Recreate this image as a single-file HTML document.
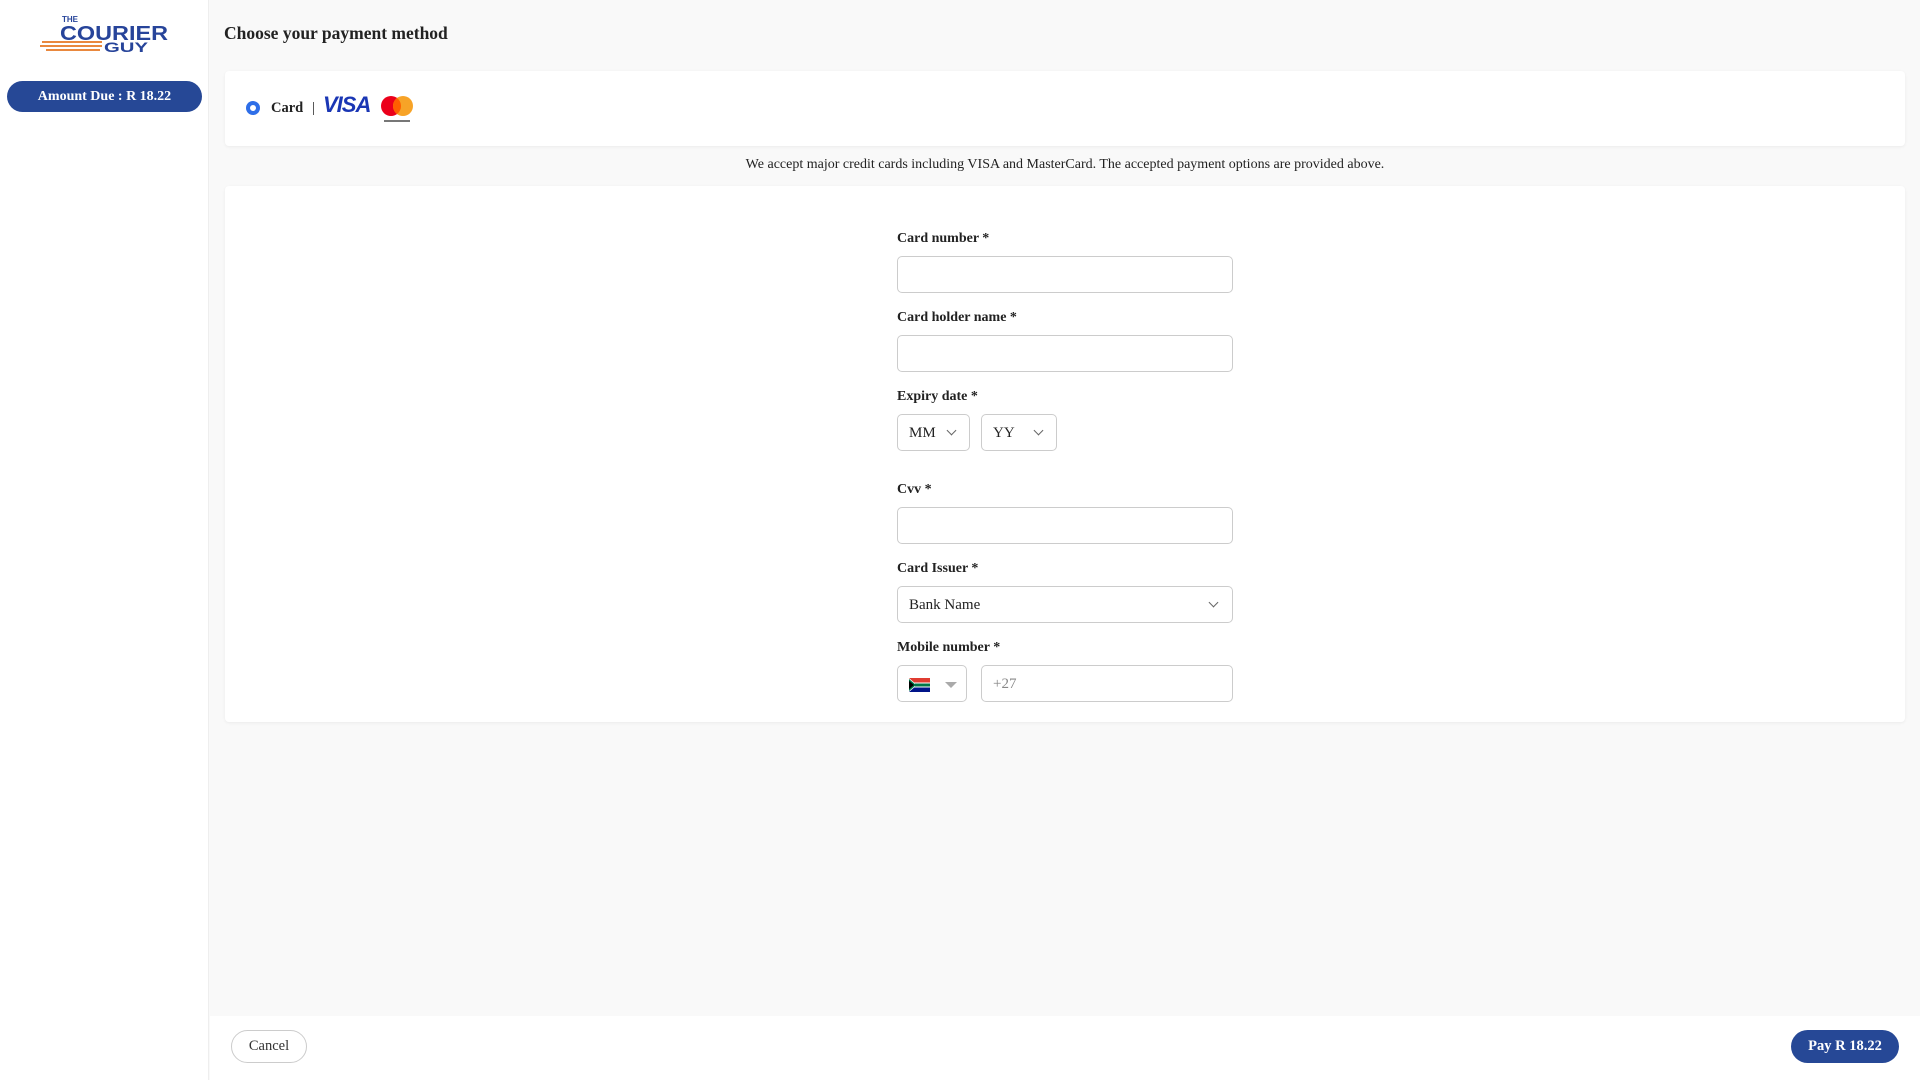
<!DOCTYPE html>
<html><head><style>
*{box-sizing:border-box;margin:0;padding:0}
body{width:1920px;height:1080px;background:#f9f9f9;font-family:"Liberation Serif",serif;color:#222;position:relative;overflow:hidden}
.side{position:absolute;left:0;top:0;width:209px;height:1080px;background:#fff;border-right:1px solid #eee}
.amt{position:absolute;left:7px;top:81px;width:195px;height:31px;border-radius:16px;background:#264896;color:#fff;font-weight:bold;font-size:14px;text-align:center;line-height:31px}
h1{position:absolute;left:224px;top:23px;font-size:17.5px;font-weight:bold;color:#222}
.box{position:absolute;left:225px;width:1680px;background:#fff;border-radius:4px;box-shadow:0 1px 3px rgba(0,0,0,.06)}
.lbl{position:absolute;left:897px;font-size:14px;font-weight:bold;color:#222}
.in{position:absolute;height:37px;border:1px solid #ccc;border-radius:5px;background:#fff;font-size:15px;line-height:36px;padding-left:11px}
.chev{position:absolute;top:12px;width:7px;height:7px;border-right:1.6px solid #666;border-bottom:1.6px solid #666;transform:rotate(45deg)}
.foot{position:absolute;left:210px;top:1016px;width:1710px;height:64px;background:#fff}
.btn{position:absolute;top:1030px;height:33px;border-radius:17px;font-size:14.5px;text-align:center;line-height:33px}
</style></head><body>
<div class="side">
<svg style="position:absolute;left:40px;top:12px" width="132" height="42" viewBox="0 0 132 42">
<text x="22" y="10" font-family="Liberation Sans" font-weight="bold" font-size="8" fill="#27449a">THE</text>
<text x="20" y="28" font-family="Liberation Sans" font-weight="900" font-size="20" fill="#27449a" textLength="108" lengthAdjust="spacingAndGlyphs">COURIER</text>
<g stroke="#e9883e" stroke-width="2"><line x1="2" y1="30" x2="62" y2="30"/><line x1="0" y1="34" x2="62" y2="34"/><line x1="6" y1="38" x2="60" y2="38"/></g>
<text x="64" y="40" font-family="Liberation Sans" font-weight="900" font-size="14" fill="#27449a" textLength="44" lengthAdjust="spacingAndGlyphs">GUY</text>
</svg>
<div class="amt">Amount Due : R 18.22</div>
</div>
<h1>Choose your payment method</h1>
<div class="box" style="top:71px;height:75px">
<div style="position:absolute;left:21px;top:30px;width:14px;height:14px;border-radius:50%;background:#2e6ee8"><div style="position:absolute;left:4px;top:4px;width:6px;height:6px;border-radius:50%;background:#fff"></div></div>
<div style="position:absolute;left:46px;top:29px;font-size:14.5px;font-weight:bold">Card</div>
<div style="position:absolute;left:87px;top:29px;font-size:15px">|</div>
<div style="position:absolute;left:98px;top:21px;font-family:'Liberation Sans';font-style:italic;font-weight:900;font-size:22px;color:#1a36b4;letter-spacing:-1px">VISA</div>
<svg style="position:absolute;left:155px;top:24px" width="34" height="30" viewBox="0 0 34 30"><circle cx="11" cy="11" r="10" fill="#eb001b"/><circle cx="23" cy="11" r="10" fill="#f79e1b" opacity=".95"/><path d="M17 3a10 10 0 0 1 0 16a10 10 0 0 1 0-16z" fill="#ff5f00"/><rect x="4" y="25" width="26" height="2" fill="#777"/></svg>
</div>
<div style="position:absolute;left:225px;width:1680px;top:157px;text-align:center;font-size:14px;color:#222">We accept major credit cards including VISA and MasterCard. The accepted payment options are provided above.</div>
<div class="box" style="top:186px;height:536px"></div>
<div class="lbl" style="top:231px">Card number *</div>
<div class="in" style="left:897px;top:256px;width:336px"></div>
<div class="lbl" style="top:310px">Card holder name *</div>
<div class="in" style="left:897px;top:335px;width:336px"></div>
<div class="lbl" style="top:389px">Expiry date *</div>
<div class="in" style="left:897px;top:414px;width:73px">MM<div class="chev" style="left:50px"></div></div>
<div class="in" style="left:981px;top:414px;width:76px">YY<div class="chev" style="left:53px"></div></div>
<div class="lbl" style="top:482px">Cvv *</div>
<div class="in" style="left:897px;top:507px;width:336px"></div>
<div class="lbl" style="top:561px">Card Issuer *</div>
<div class="in" style="left:897px;top:586px;width:336px">Bank Name<div class="chev" style="left:312px"></div></div>
<div class="lbl" style="top:640px">Mobile number *</div>
<div class="in" style="left:897px;top:665px;width:70px">
<svg style="position:absolute;left:11px;top:12px" width="21" height="14" viewBox="0 0 21 14"><rect width="21" height="7" fill="#e03c31"/><rect y="7" width="21" height="7" fill="#001489"/><path d="M0 0L8 7L0 14" fill="#fff"/><rect x="0" y="4.5" width="21" height="5" fill="#fff"/><path d="M0 1.5L6.5 7L0 12.5" fill="#ffb81c"/><rect x="6" y="5.5" width="15" height="3" fill="#007749"/><path d="M0 1L7 7L0 13z" fill="#007749"/><path d="M0 3L5 7L0 11z" fill="#000"/></svg>
<div style="position:absolute;left:47px;top:16px;border-left:6px solid transparent;border-right:6px solid transparent;border-top:6px solid #aaa"></div></div>
<div class="in" style="left:981px;top:665px;width:252px;color:#888">+27</div>
<div class="foot"></div>
<div class="btn" style="left:231px;width:76px;border:1px solid #ccc;background:#fff;color:#333;line-height:31px">Cancel</div>
<div class="btn" style="left:1791px;width:108px;background:#264896;color:#fff;font-weight:bold">Pay R 18.22</div>
</body></html>
